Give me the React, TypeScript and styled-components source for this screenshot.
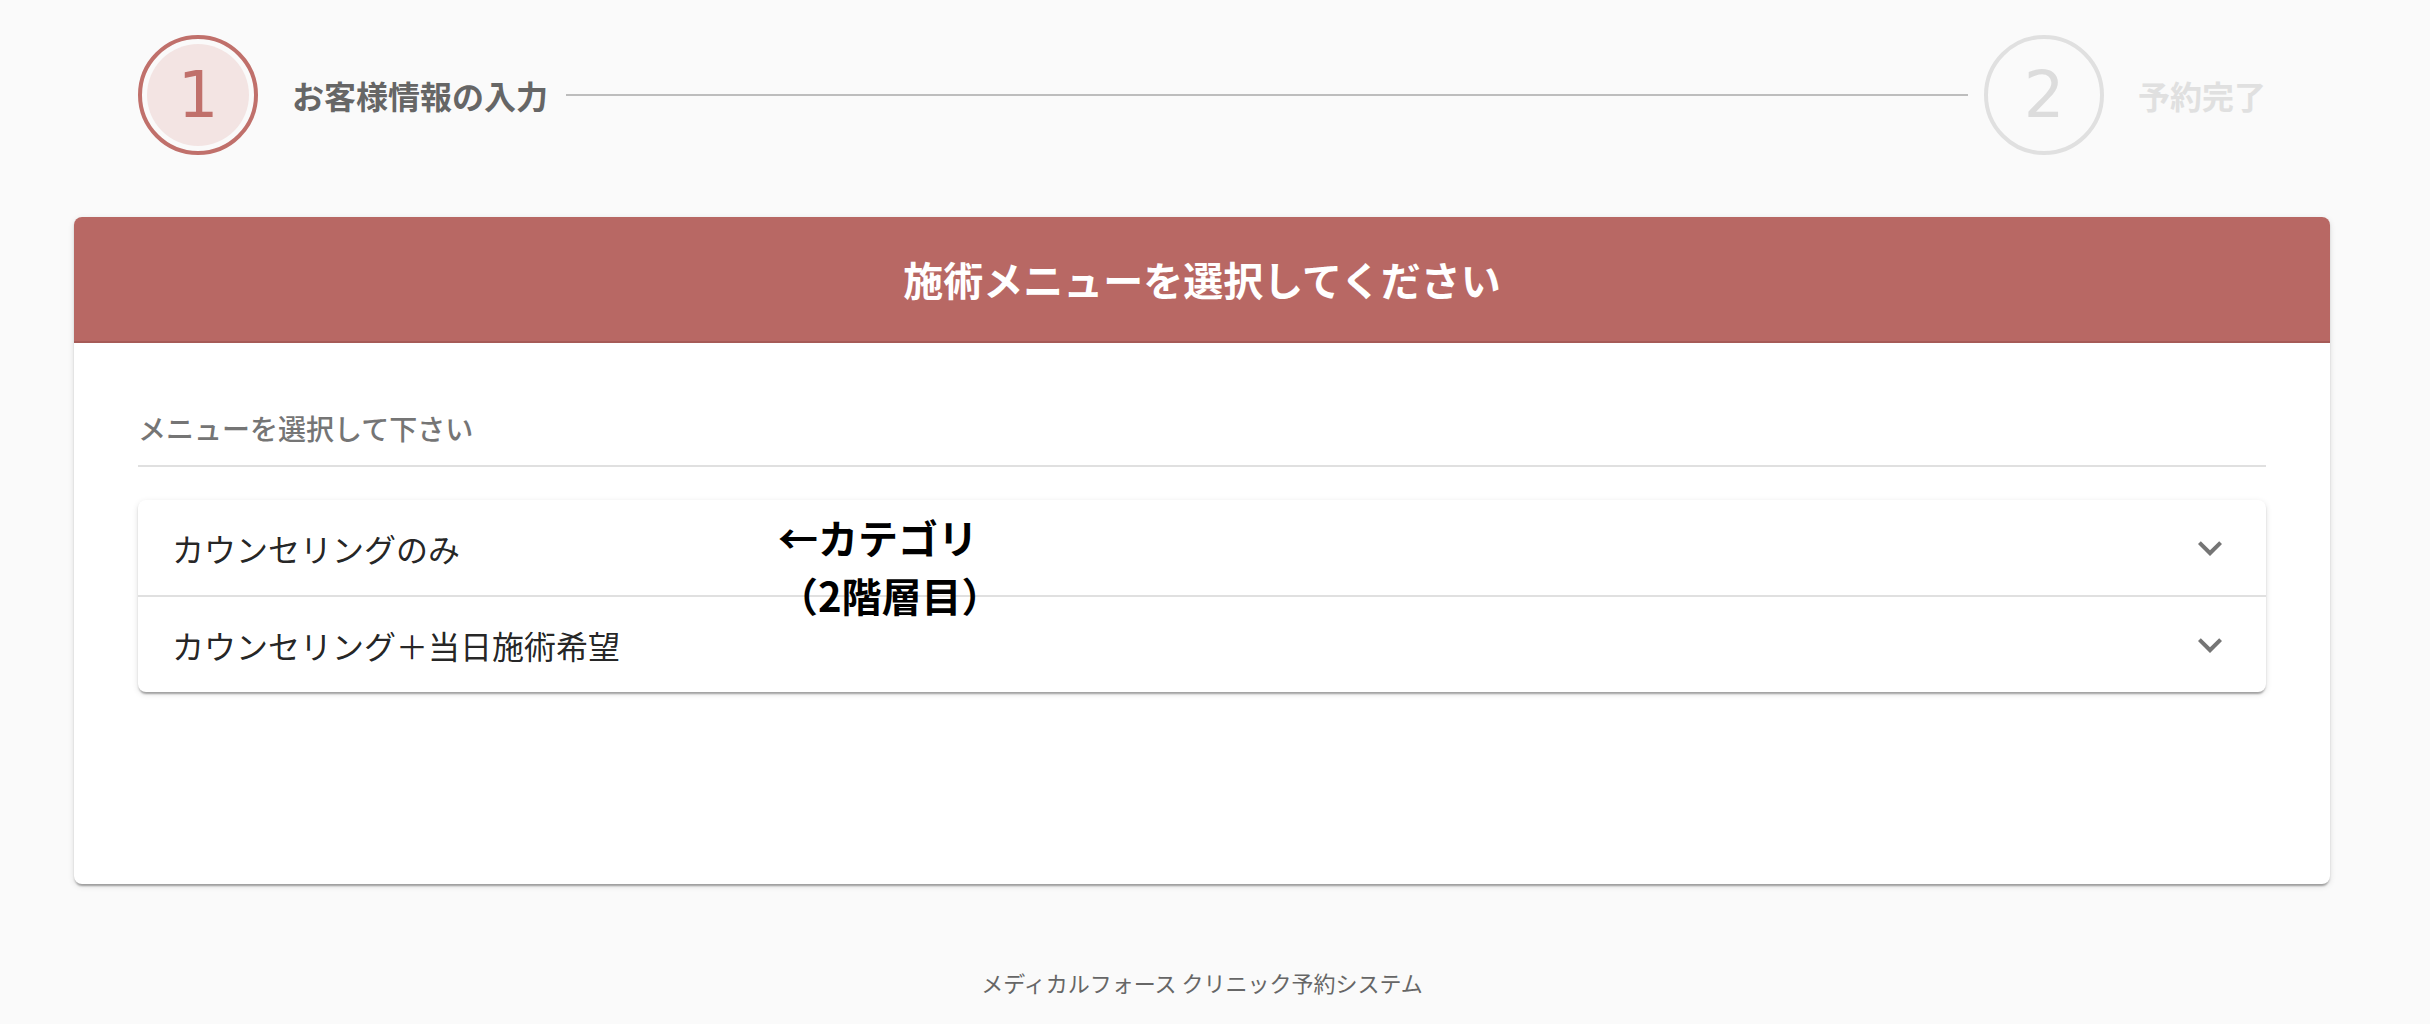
import React from 'react';
import styled, { createGlobalStyle } from 'styled-components';

const colors = {
  primary: '#b86864',
  primaryDark: '#a65b57',
  ring: '#c0706b',
  ringFill: '#f3e4e3',
  disabled: '#e0e0e0',
  divider: '#e0e0e0',
  text: 'rgba(0, 0, 0, 0.87)',
  subText: '#757575',
  stepText: '#666666',
  bg: '#fafafa',
};

const GlobalStyle = createGlobalStyle`
  html, body {
    margin: 0;
    padding: 0;
    background: ${colors.bg};
    font-family: 'Noto Sans CJK JP', 'Noto Sans', sans-serif;
  }
`;

type Step = {
  number: number;
  label: string;
};

const steps: Step[] = [
  { number: 1, label: 'お客様情報の入力' },
  { number: 2, label: '予約完了' },
];

const categories = ['カウンセリングのみ', 'カウンセリング＋当日施術希望'];

const ExpandIcon = () => (
  <svg width="48" height="48" viewBox="0 0 24 24" fill="currentColor">
    <path d="M16.59 8.59L12 13.17 7.41 8.59 6 10l6 6 6-6z" />
  </svg>
);

const App: React.FC = () => {
  const current = 1;

  return (
    <S.Page>
      <GlobalStyle />
      <S.Stepper>
        {steps.map((step, i) => (
          <React.Fragment key={step.number}>
            {i > 0 && <S.Connector />}
            <S.Step>
              <S.Circle active={step.number === current}>
                <S.CircleInner active={step.number === current}>{step.number}</S.CircleInner>
              </S.Circle>
              <S.StepLabel active={step.number === current}>{step.label}</S.StepLabel>
            </S.Step>
          </React.Fragment>
        ))}
      </S.Stepper>

      <S.Card>
        <S.CardHeader>施術メニューを選択してください</S.CardHeader>
        <S.CardBody>
          <S.FieldLabel>メニューを選択して下さい</S.FieldLabel>
          <S.Accordion>
            {categories.map((c) => (
              <S.AccordionItem key={c}>
                <S.ItemText>{c}</S.ItemText>
                <S.Expand>
                  <ExpandIcon />
                </S.Expand>
              </S.AccordionItem>
            ))}
            <S.Note>
              ←カテゴリ
              <br />
              （2階層目）
            </S.Note>
          </S.Accordion>
        </S.CardBody>
      </S.Card>

      <S.Footer>メディカルフォース クリニック予約システム</S.Footer>
    </S.Page>
  );
};

export default App;

const S = {
  Page: styled.div`
    padding: 34px 100px 20px 74px;
  `,
  Stepper: styled.div`
    display: flex;
    align-items: center;
    padding: 0 64px;
    height: 121px;
  `,
  Step: styled.div`
    display: flex;
    align-items: center;
    gap: 34px;
  `,
  Connector: styled.div`
    flex: 1;
    height: 2px;
    background: #bdbdbd;
    margin: 0 16px 0 18px;
  `,
  Circle: styled.div<{ active?: boolean }>`
    width: 120px;
    height: 120px;
    box-sizing: border-box;
    border-radius: 50%;
    border: 4px solid ${(p) => (p.active ? colors.ring : colors.disabled)};
    padding: 5px;
    display: flex;
  `,
  CircleInner: styled.div<{ active?: boolean }>`
    flex: 1;
    border-radius: 50%;
    background: ${(p) => (p.active ? colors.ringFill : 'transparent')};
    color: ${(p) => (p.active ? colors.ring : '#dcdcdc')};
    display: flex;
    align-items: center;
    justify-content: center;
    font-family: 'DejaVu Sans', sans-serif;
    font-size: 64px;
    font-weight: 400;
    line-height: 1;
  `,
  StepLabel: styled.span<{ active?: boolean }>`
    font-size: 32px;
    font-weight: 700;
    color: ${(p) => (p.active ? colors.stepText : '#e0e0e0')};
    white-space: nowrap;
  `,
  Card: styled.div`
    margin-top: 62px;
    background: #fff;
    border-radius: 8px;
    box-shadow: 0 4px 2px -2px rgba(0, 0, 0, 0.2), 0 2px 2px 0 rgba(0, 0, 0, 0.14),
      0 2px 6px 0 rgba(0, 0, 0, 0.12);
    overflow: hidden;
  `,
  CardHeader: styled.div`
    height: 124px;
    background: ${colors.primary};
    border-bottom: 2px solid ${colors.primaryDark};
    display: flex;
    align-items: center;
    justify-content: center;
    color: #fff;
    font-size: 40px;
    font-weight: 700;
  `,
  CardBody: styled.div`
    padding: 64px 64px 192px;
  `,
  FieldLabel: styled.div`
    font-size: 28px;
    line-height: 42px;
    font-weight: 500;
    color: ${colors.subText};
    padding-bottom: 16px;
    border-bottom: 2px solid ${colors.divider};
  `,
  Accordion: styled.div`
    position: relative;
    margin-top: 33px;
    background: #fff;
    border-radius: 8px;
    box-shadow: 0 4px 2px -2px rgba(0, 0, 0, 0.2), 0 2px 2px 0 rgba(0, 0, 0, 0.14),
      0 2px 6px 0 rgba(0, 0, 0, 0.12);
  `,
  AccordionItem: styled.div`
    display: flex;
    align-items: center;
    justify-content: space-between;
    height: 95px;
    padding: 0 32px 0 34px;

    & + & {
      border-top: 2px solid ${colors.divider};
    }
  `,
  ItemText: styled.span`
    font-size: 32px;
    color: ${colors.text};
  `,
  Expand: styled.span`
    display: flex;
    color: ${colors.subText};
  `,
  Note: styled.div`
    position: absolute;
    left: 640px;
    top: 8px;
    font-size: 40px;
    line-height: 58px;
    font-weight: 700;
    color: #000;
  `,
  Footer: styled.div`
    margin-top: 82px;
    text-align: center;
    font-size: 22px;
    line-height: 32px;
    color: #666;
  `,
};
